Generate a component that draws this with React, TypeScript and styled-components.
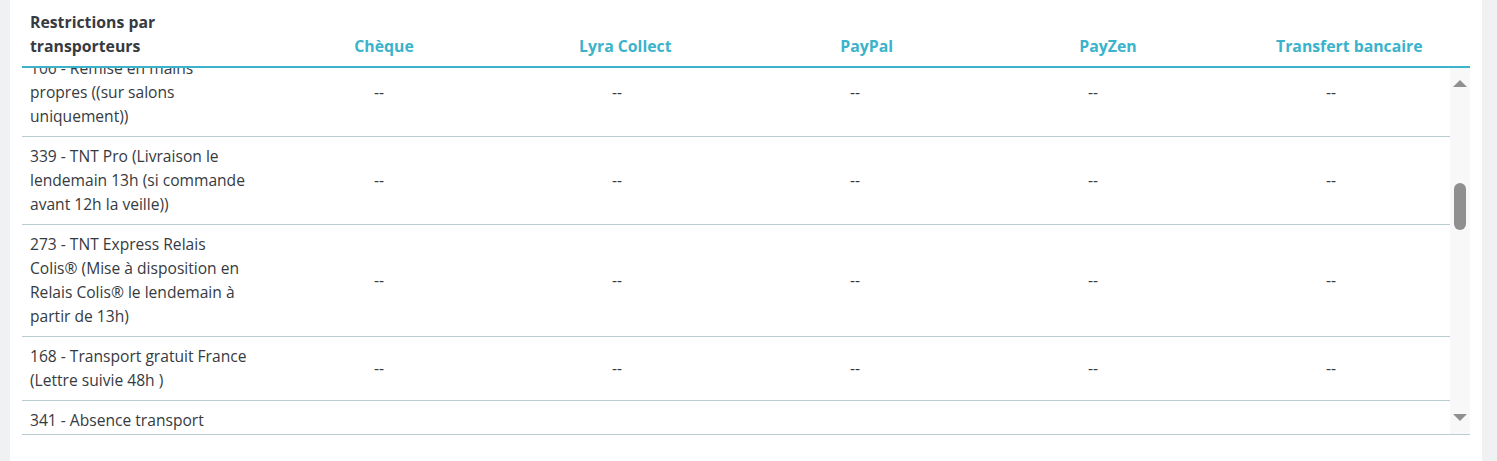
import React, { useLayoutEffect, useRef } from "react";
import styled, { createGlobalStyle } from "styled-components";

const GlobalStyle = createGlobalStyle`
  html, body { margin: 0; padding: 0; }
  body {
    background: #eff1f2;
    font-family: "Open Sans", "Noto Sans", Arial, sans-serif;
    color: #363a41;
    font-size: 15.6px;
    line-height: 24px;
  }
`;

const TEAL = "#3ab3cb";
const BORDER = "#bbcdd2";

const Card = styled.div`
  margin: 0 15px 0 10px;
  background: #fff;
  min-height: 461px;
  padding: 0 12px;
  box-sizing: border-box;
`;

const HeaderRow = styled.div`
  display: grid;
  grid-template-columns: repeat(6, 1fr);
  border-bottom: 2px solid ${TEAL};
`;

const HeadCell = styled.div<{ $first?: boolean }>`
  padding: 10px 8px 8px;
  font-weight: 700;
  font-size: 15.8px;
  line-height: 24px;
  display: flex;
  align-items: flex-end;
  justify-content: ${(p) => (p.$first ? "flex-start" : "center")};
  text-align: ${(p) => (p.$first ? "left" : "center")};
  color: ${(p) => (p.$first ? "#363a41" : TEAL)};
`;

const BodyFrame = styled.div`
  display: flex;
  height: 366px;
  border-bottom: 1px solid ${BORDER};
`;

const Viewport = styled.div`
  flex: 1;
  min-width: 0;
  overflow: hidden;
`;

const Row = styled.div`
  display: grid;
  grid-template-columns: repeat(6, 1fr);
  border-bottom: 1px solid ${BORDER};
`;

const Cell = styled.div<{ $first?: boolean }>`
  padding: 7px 8px 8px;
  font-size: 15.6px;
  line-height: 24px;
  display: flex;
  align-items: center;
  justify-content: ${(p) => (p.$first ? "flex-start" : "center")};
  min-width: 0;
`;

const Rail = styled.div`
  width: 20px;
  flex: none;
  background: #f8f8f8;
  display: flex;
  flex-direction: column;
  align-items: center;
`;

const Arrow = styled.div<{ $down?: boolean }>`
  width: 0;
  height: 0;
  border-left: 7px solid transparent;
  border-right: 7px solid transparent;
  ${(p) =>
    p.$down
      ? `border-top: 7px solid #8f8f8f; margin-top: auto; margin-bottom: 13px;`
      : `border-bottom: 7px solid #8f8f8f; margin-top: 12px;`}
`;

const Thumb = styled.div`
  width: 12px;
  height: 47px;
  border-radius: 6px;
  background: #8f8f8f;
`;

type Carrier = { label: string; dashes: boolean };

const carriers: Carrier[] = [
  { label: "106 - Remise en mains propres ((sur salons uniquement))", dashes: true },
  { label: "339 - TNT Pro (Livraison le lendemain 13h (si commande avant 12h la veille))", dashes: true },
  { label: "273 - TNT Express Relais Colis® (Mise à disposition en Relais Colis® le lendemain à partir de 13h)", dashes: true },
  { label: "168 - Transport gratuit France (Lettre suivie 48h )", dashes: true },
  { label: "341 - Absence transport", dashes: false },
];

const methods = ["Chèque", "Lyra Collect", "PayPal", "PayZen", "Transfert bancaire"];

export default function App() {
  const viewRef = useRef<HTMLDivElement>(null);
  useLayoutEffect(() => {
    if (viewRef.current) viewRef.current.scrollTop = 19;
  }, []);

  return (
    <>
      <GlobalStyle />
      <Card>
        <HeaderRow>
          <HeadCell $first>Restrictions par transporteurs</HeadCell>
          {methods.map((m) => (
            <HeadCell key={m}>{m}</HeadCell>
          ))}
        </HeaderRow>
        <BodyFrame>
          <Viewport ref={viewRef}>
            {carriers.map((c) => (
              <Row key={c.label}>
                <Cell $first>{c.label}</Cell>
                {methods.map((m) => (
                  <Cell key={m}>{c.dashes ? "--" : ""}</Cell>
                ))}
              </Row>
            ))}
          </Viewport>
          <Rail>
            <Arrow />
            <Thumb style={{ marginTop: 96 }} />
            <Arrow $down />
          </Rail>
        </BodyFrame>
      </Card>
    </>
  );
}
